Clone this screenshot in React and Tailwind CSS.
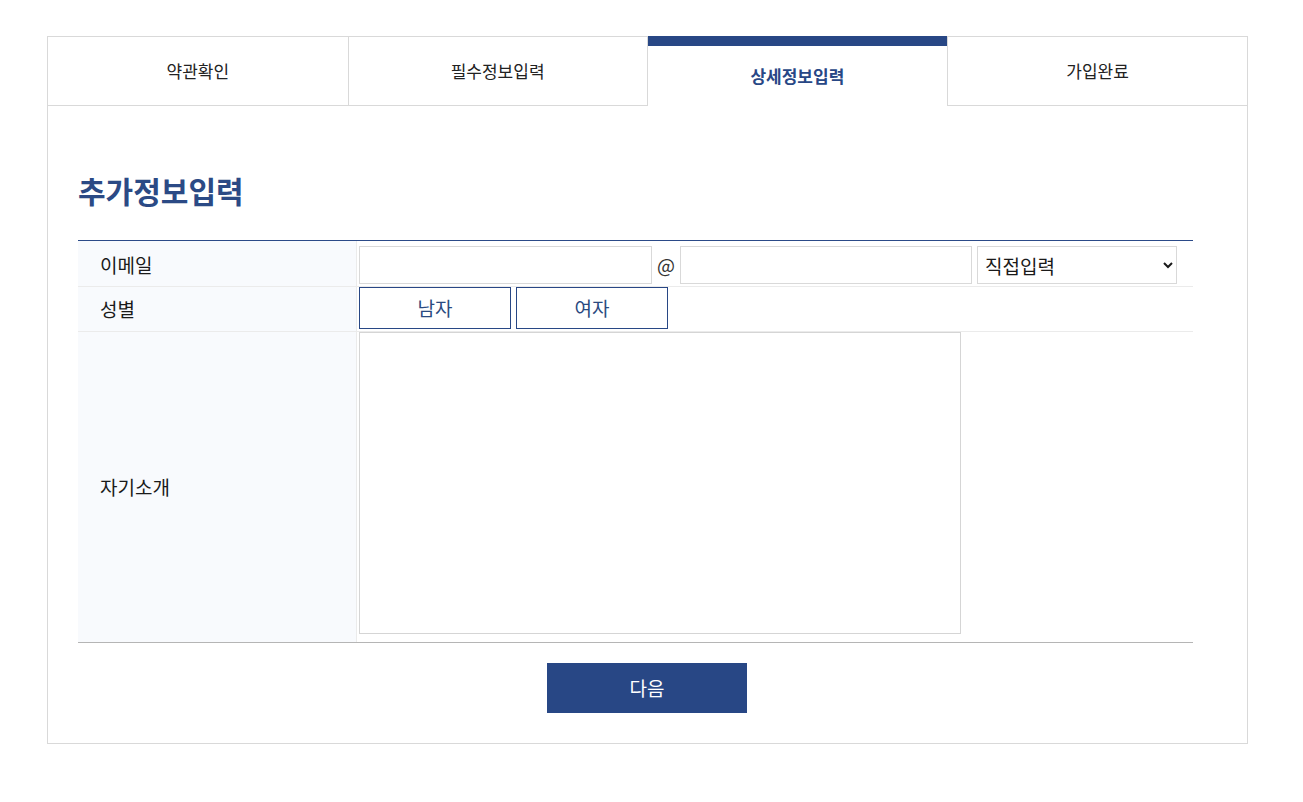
const tabs = [
  { label: "약관확인" },
  { label: "필수정보입력" },
  { label: "상세정보입력", active: true },
  { label: "가입완료" },
];

const font = { fontFamily: '"Noto Sans CJK KR", "Noto Sans", sans-serif' };

export default function App() {
  return (
    <div className="min-h-screen bg-white pt-9" style={font}>
      <div className="ml-[47px] w-[1201px] border-x border-b border-[#d9d9d9]">
        {/* step tabs */}
        <div className="flex">
          {tabs.map((t, i) =>
            t.active ? (
              <div
                key={i}
                className="flex h-[70px] w-[300px] items-center justify-center border-t-[10px] border-t-[#284785] text-[17px] font-bold text-[#284785]"
              >
                {t.label}
              </div>
            ) : (
              <div
                key={i}
                className={
                  "flex h-[70px] w-[300px] items-center justify-center border-y border-[#d9d9d9] text-[17px] text-[#222] " +
                  (i === 3 ? "border-l" : i === 1 ? "border-x" : "")
                }
              >
                {t.label}
              </div>
            )
          )}
        </div>

        <div className="pl-[30px] pr-[54px] pb-[20px]">
          <h2 className="mt-[64px] mb-[30px] text-[30px] font-bold leading-[40px] text-[#2b4a85]">
            추가정보입력
          </h2>

          <div className="border-t border-b border-t-[#2b4a88] border-b-[#b5b5b5] text-[19px] text-[#1a1a1a]">
            {/* email */}
            <div className="flex h-[46px] border-b border-[#ebebeb]">
              <div className="flex w-[279px] items-center border-r border-[#ebebeb] bg-[#f8fafd] pl-[22px] pt-[3px]">
                이메일
              </div>
              <div className="ml-[2px] flex items-center pt-[3px]">
                <input className="h-[38px] w-[293px] border border-[#d9d9d9] px-2 outline-none" />
                <span className="mx-[5px] text-[19px] text-[#333]">@</span>
                <input className="h-[38px] w-[292px] border border-[#d9d9d9] px-2 outline-none" />
                <select className="ml-[5px] h-[38px] w-[200px] border border-[#d9d9d9] bg-white pl-[3px] pr-2 text-[19px] text-[#1a1a1a] outline-none">
                  <option>직접입력</option>
                  <option>naver.com</option>
                  <option>gmail.com</option>
                </select>
              </div>
            </div>

            {/* gender */}
            <div className="flex h-[45px] border-b border-[#ebebeb]">
              <div className="flex w-[279px] items-center border-r border-[#ebebeb] bg-[#f8fafd] pl-[22px]">
                성별
              </div>
              <div className="ml-[2px] flex gap-[5px] pb-[2px]">
                <button className="h-[42px] w-[152px] border border-[#284785] bg-white text-[19px] text-[#2a4a80]">
                  남자
                </button>
                <button className="h-[42px] w-[152px] border border-[#284785] bg-white text-[19px] text-[#2a4a80]">
                  여자
                </button>
              </div>
            </div>

            {/* intro */}
            <div className="flex h-[310px]">
              <div className="flex w-[279px] items-center border-r border-[#ebebeb] bg-[#f8fafd] pl-[22px]">
                자기소개
              </div>
              <div className="ml-[2px]">
                <textarea className="h-[302px] w-[602px] resize-none border border-[#d5d5d5] p-2 outline-none" />
              </div>
            </div>
          </div>
        </div>

        <div className="flex justify-center pb-[30px]">
          <button className="ml-[-1px] h-[50px] w-[200px] bg-[#284785] text-[19px] text-white">
            다음
          </button>
        </div>
      </div>
    </div>
  );
}
